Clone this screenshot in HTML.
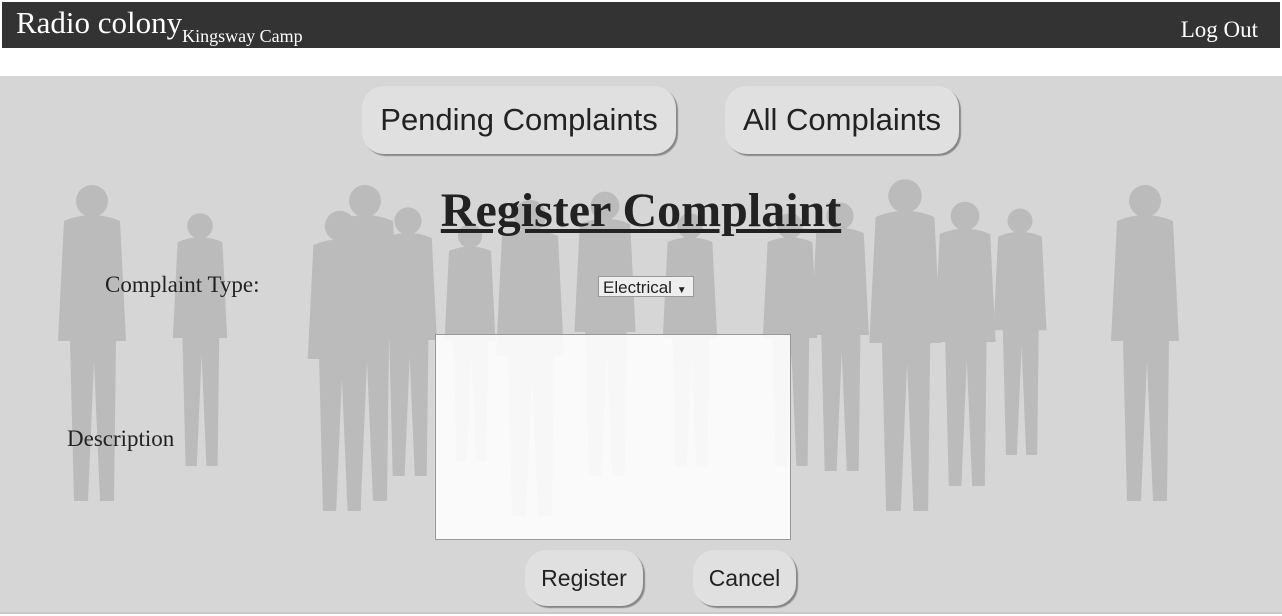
<!DOCTYPE html>
<html><head><style>
body{margin:0;width:1282px;height:616px;background:#fff;position:relative;overflow:hidden;font-family:"Liberation Serif",serif}
.hdr{position:absolute;left:2px;top:2px;width:1278px;height:46px;background:#333;color:#fff}
.t{position:absolute;left:14px;top:3px;font-size:31px}
.t small{font-size:18px;vertical-align:-9px}
.lo{position:absolute;right:22px;top:15px;font-size:23px}
.main{position:absolute;left:0;top:76px;width:1282px;height:536px;background:#d6d6d6;border-bottom:2px solid #c8c8c8}
.btn{position:absolute;background:#e0e0e0;border-radius:22px;box-shadow:2px 2px 1px #888;font-family:"Liberation Sans",sans-serif;color:#222;text-align:center}
svg{position:absolute;left:0;top:0}
h1{position:absolute;left:0;width:1282px;text-align:center;top:183px;margin:0;font-size:48px;font-weight:bold;text-decoration:underline;color:#222}
.lab{position:absolute;font-size:23px;color:#222}
</style></head><body>
<div class="hdr"><div class="t">Radio colony<small>Kingsway Camp</small></div><div class="lo">Log Out</div></div>
<div class="main">
<svg width="1282" height="536" fill="#bbb">
<defs>
<g id="p">
<circle cx="0" cy="0" r="16"/>
<path d="M-28 20 Q0 8 28 20 L34 140 L24 140 L22 300 L8 300 L2 160 L-4 300 L-18 300 L-22 140 L-34 140 Z"/>
</g>
</defs>
<use href="#p" transform="translate(92,125) scale(1.0)"/>
<use href="#p" transform="translate(200,150) scale(0.8)"/>
<use href="#p" transform="translate(340,150) scale(0.95)"/>
<use href="#p" transform="translate(365,125) scale(1.0)"/>
<use href="#p" transform="translate(408,145) scale(0.85)"/>
<use href="#p" transform="translate(470,160) scale(0.75)"/>
<use href="#p" transform="translate(530,140) scale(1.0)"/>
<use href="#p" transform="translate(605,130) scale(0.9)"/>
<use href="#p" transform="translate(690,150) scale(0.8)"/>
<use href="#p" transform="translate(790,150) scale(0.8)"/>
<use href="#p" transform="translate(840,140) scale(0.85)"/>
<use href="#p" transform="translate(905,120) scale(1.05)"/>
<use href="#p" transform="translate(965,140) scale(0.9)"/>
<use href="#p" transform="translate(1020,145) scale(0.78)"/>
<use href="#p" transform="translate(1145,125) scale(1.0)"/>
</svg>
</div>
<div class="btn" style="left:362px;top:86px;width:314px;height:68px;line-height:68px;font-size:31px">Pending Complaints</div>
<div class="btn" style="left:725px;top:86px;width:234px;height:68px;line-height:68px;font-size:31px">All Complaints</div>
<h1>Register Complaint</h1>
<div class="lab" style="left:105px;top:272px">Complaint Type:</div>
<div style="position:absolute;left:598px;top:276px;width:96px;height:21px;background:#eee;border:1px solid #999;font:17px 'Liberation Sans',sans-serif;line-height:21px;padding-left:4px;box-sizing:border-box;color:#222">Electrical <span style="font-size:10px">▼</span></div>
<div class="lab" style="left:67px;top:426px">Description</div>
<div style="position:absolute;left:435px;top:334px;width:356px;height:206px;background:rgba(255,255,255,0.88);border:1px solid #999;box-sizing:border-box"></div>
<div class="btn" style="left:525px;top:550px;width:118px;height:56px;line-height:56px;font-size:23px">Register</div>
<div class="btn" style="left:693px;top:550px;width:103px;height:56px;line-height:56px;font-size:23px">Cancel</div>
</body></html>
